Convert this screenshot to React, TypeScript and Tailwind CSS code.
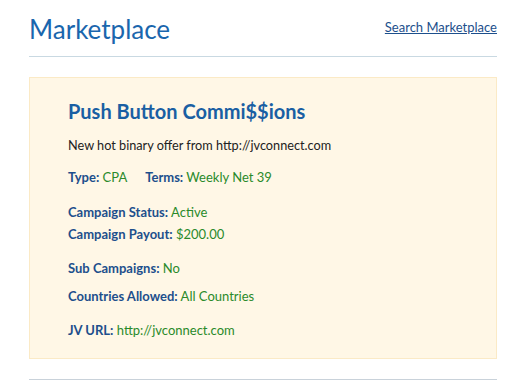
export default function App() {
  const font = { fontFamily: "Lato, 'Open Sans', sans-serif" };
  return (
    <div className="min-h-screen bg-white px-[29px]" style={font}>
      <div className="flex items-center justify-between border-b border-[#c9d9e2] pt-[12px] pb-[10px]">
        <h1 className="text-[26px] leading-[34px] text-[#1a66ad]">Marketplace</h1>
        <a href="#" className="mb-[3px] text-[13px] text-[#1d4f8c] underline">
          Search Marketplace
        </a>
      </div>

      <div className="mt-[20px] border border-[#fbeac6] bg-[#fff7e6] pl-[38px] pr-4 pt-[20px] pb-[19px]">
        <h2 className="text-[20px] font-bold leading-[26px] text-[#1a5fa3]">Push Button Commi$$ions</h2>
        <p className="mt-[12px] text-[12.7px] leading-[18px] text-[#222]">New hot binary offer from http://jvconnect.com</p>

        <div className="mt-[14px] flex gap-[18px] text-[13px] leading-[18px]">
          <span>
            <b className="text-[#1d4f8c]">Type:</b> <span className="text-[#2a8a2a]">CPA</span>
          </span>
          <span>
            <b className="text-[#1d4f8c]">Terms:</b> <span className="text-[#2a8a2a]">Weekly Net 39</span>
          </span>
        </div>

        <div className="mt-[17px] flex flex-col gap-[4px] text-[13px] leading-[18px]">
          <div>
            <b className="text-[#1d4f8c]">Campaign Status:</b> <span className="text-[#2a8a2a]">Active</span>
          </div>
          <div>
            <b className="text-[#1d4f8c]">Campaign Payout:</b> <span className="text-[#2a8a2a]">$200.00</span>
          </div>
        </div>

        <div className="mt-[16px] text-[13px] leading-[18px]">
          <b className="text-[#1d4f8c]">Sub Campaigns:</b> <span className="text-[#2a8a2a]">No</span>
        </div>
        <div className="mt-[10px] text-[13px] leading-[18px]">
          <b className="text-[#1d4f8c]">Countries Allowed:</b> <span className="text-[#2a8a2a]">All Countries</span>
        </div>
        <div className="mt-[16px] text-[13px] leading-[18px]">
          <b className="text-[#1d4f8c]">JV URL:</b> <span className="text-[#2a8a2a]">http://jvconnect.com</span>
        </div>
      </div>

      <div className="mt-[20px] border-b border-[#c9d2da]" />
    </div>
  );
}
